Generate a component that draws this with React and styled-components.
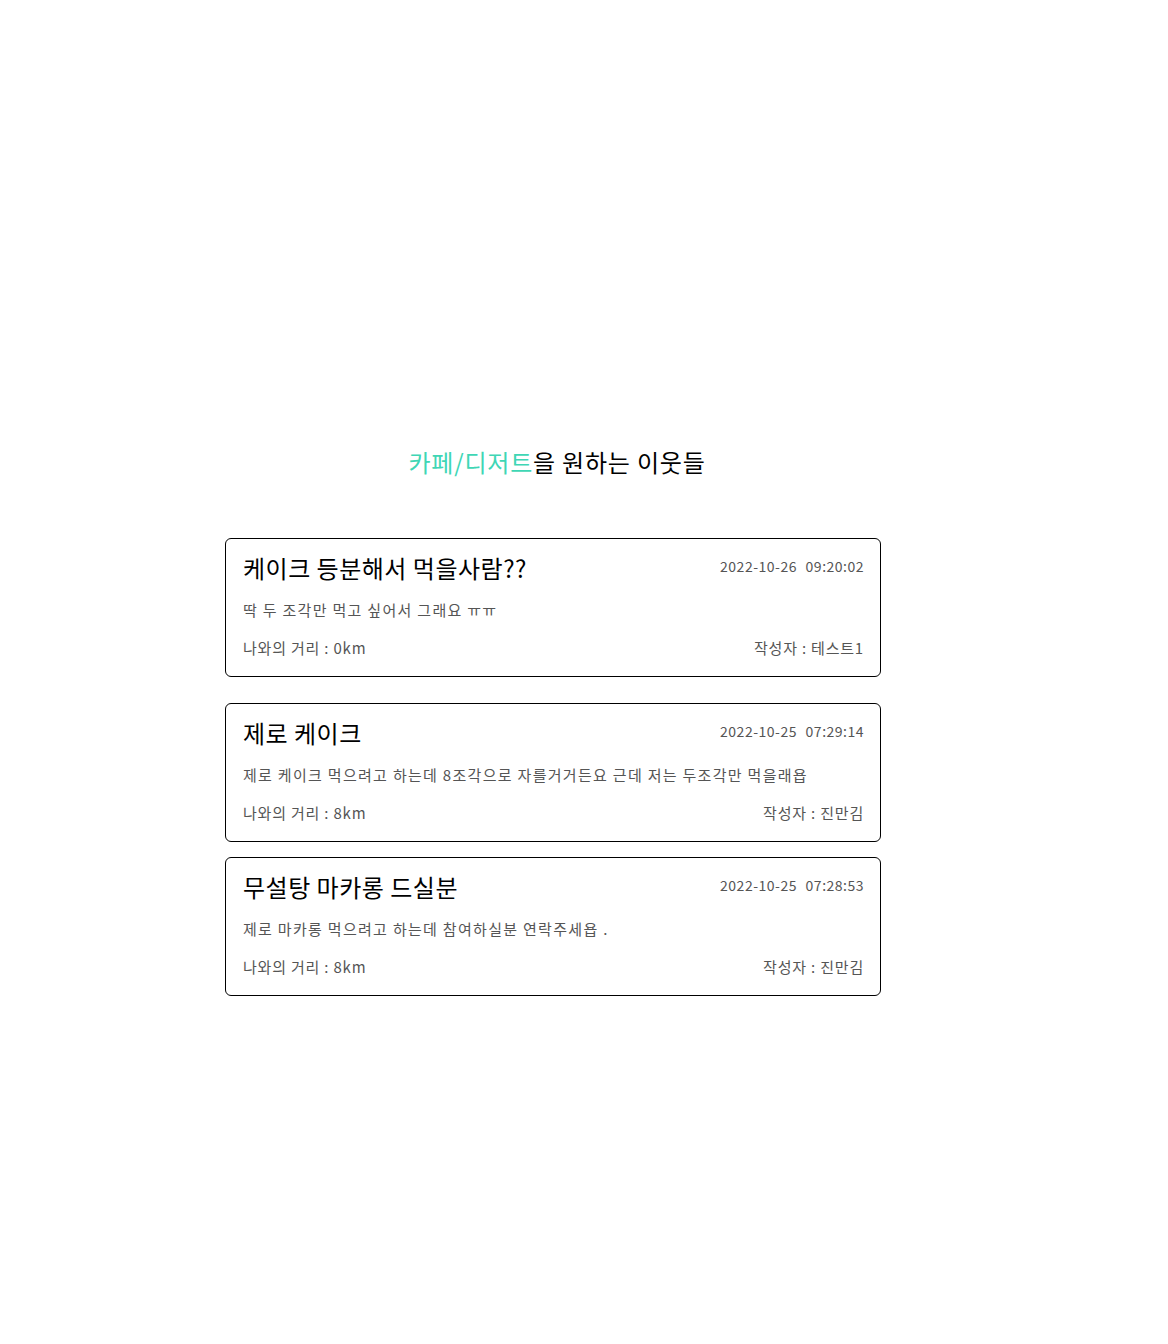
import React from "react"
import styled, { createGlobalStyle } from "styled-components"

const GlobalStyle = createGlobalStyle`
  html, body {
    margin: 0;
    padding: 0;
    background: #fff;
  }
  body {
    font-family: "Noto Sans CJK KR", "Noto Sans", sans-serif;
    color: #000;
  }
`

const Page = styled.main`
  width: 1168px;
  min-height: 1344px;
  padding-top: 445px;
  box-sizing: border-box;
`

const Section = styled.section`
  width: 656px;
  margin-left: 225px;
`

const Heading = styled.h2`
  margin: 0 0 59px 8px;
  text-align: center;
  font-size: 24px;
  font-weight: 400;
  line-height: 34px;
  letter-spacing: 0.8px;

  span {
    color: #3fd6b5;
  }
`

const Card = styled.article`
  box-sizing: border-box;
  height: 139px;
  border: 1px solid #000;
  border-radius: 6px;
  padding: 15px 16px 0 17px;
  margin-bottom: ${(p) => p.$gap}px;
`

const Row = styled.div`
  display: flex;
  justify-content: space-between;
  align-items: ${(p) => p.$align || "center"};
  margin-top: ${(p) => p.$top || 0}px;
`

const Title = styled.h3`
  margin: -2px 0 2px;
  font-size: 24px;
  font-weight: 400;
  line-height: 32px;
  letter-spacing: 0.5px;
`

const Date = styled.span`
  font-size: 14px;
  color: #555;
  line-height: 24px;
  word-spacing: 5px;
  letter-spacing: 0.5px;
`

const Content = styled.p`
  margin: 14px 0 0;
  font-size: 15px;
  line-height: 20px;
  color: #555;
  letter-spacing: 1.3px;
`

const Meta = styled.span`
  font-size: 15px;
  color: #555;
  line-height: 20px;
  letter-spacing: 0.8px;
`

const posts = [
  {
    title: "케이크 등분해서 먹을사람??",
    date: "2022-10-26 09:20:02",
    content: "딱 두 조각만 먹고 싶어서 그래요 ㅠㅠ",
    dist: "0km",
    author: "테스트1",
    gap: 26,
  },
  {
    title: "제로 케이크",
    date: "2022-10-25 07:29:14",
    content: "제로 케이크 먹으려고 하는데 8조각으로 자를거거든요 근데 저는 두조각만 먹을래욥",
    dist: "8km",
    author: "진만김",
    gap: 15,
  },
  {
    title: "무설탕 마카롱 드실분",
    date: "2022-10-25 07:28:53",
    content: "제로 마카롱 먹으려고 하는데 참여하실분 연락주세욥 .",
    dist: "8km",
    author: "진만김",
    gap: 0,
  },
]

export default function App() {
  return (
    <>
      <GlobalStyle />
      <Page>
        <Section>
          <Heading>
            <span>카페/디저트</span>을 원하는 이웃들
          </Heading>
          {posts.map((post) => (
            <Card key={post.date} $gap={post.gap}>
              <Row $align="flex-start">
                <Title>{post.title}</Title>
                <Date>{post.date}</Date>
              </Row>
              <Content>{post.content}</Content>
              <Row $top={18}>
                <Meta>나와의 거리 : {post.dist}</Meta>
                <Meta>작성자 : {post.author}</Meta>
              </Row>
            </Card>
          ))}
        </Section>
      </Page>
    </>
  )
}
